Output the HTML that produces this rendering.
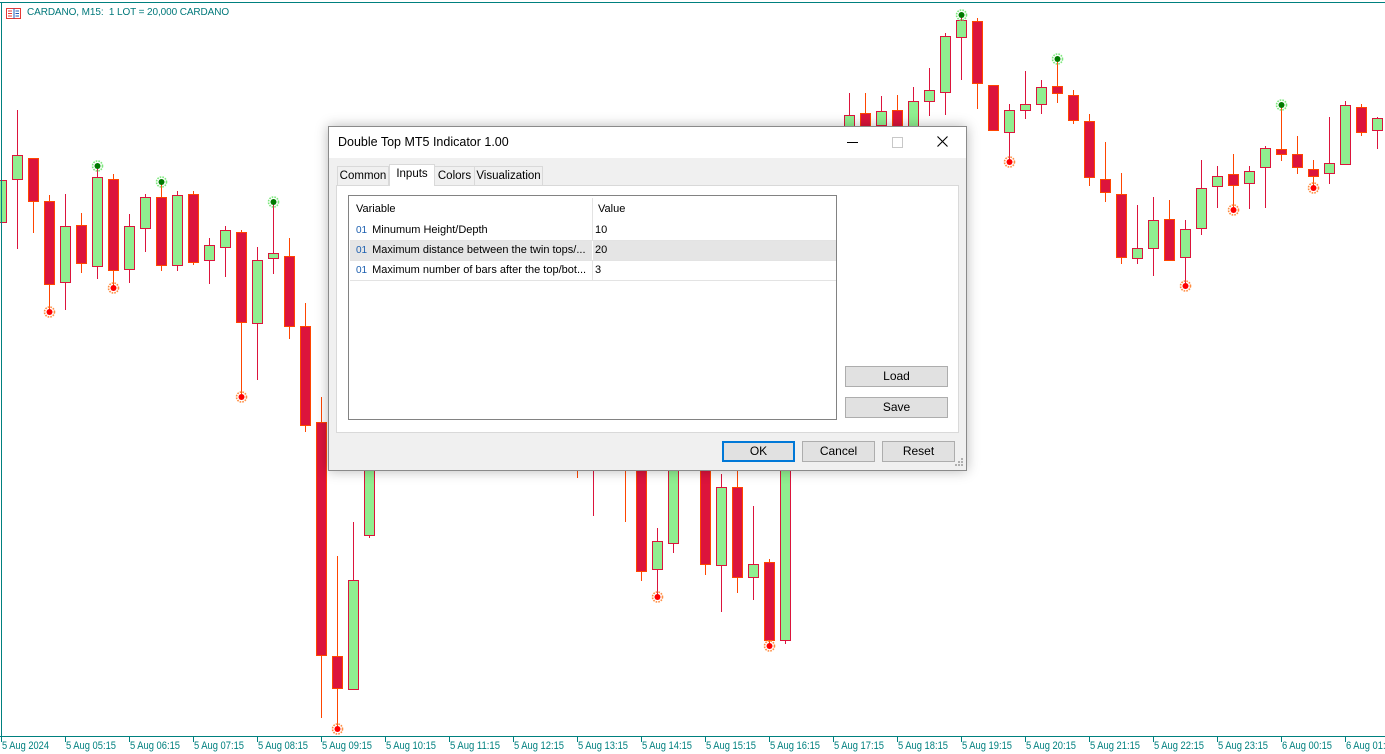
<!DOCTYPE html>
<html><head><meta charset="utf-8">
<style>
html,body{margin:0;padding:0;background:#fff;width:1385px;height:754px;overflow:hidden;position:relative;font-family:"Liberation Sans",sans-serif}
#chart{position:absolute;left:0;top:0}
.hdr{position:absolute;left:27px;top:7px;font-size:10px;color:#00787a;letter-spacing:-0.1px}
.dlg{position:absolute;left:328px;top:126px;width:637px;height:343px;background:#f0f0f0;border:1px solid #8a8a8a;box-shadow:0 0 12px rgba(0,0,0,0.28);font-size:12px;color:#000}
.title{position:absolute;left:0;top:0;width:637px;height:31px;background:#fff}
.title .t{position:absolute;left:9px;top:8px;font-size:12.5px}
.tab{position:absolute;top:39px;height:19px;border:1px solid #d9d9d9;border-bottom:none;background:#f0f0f0;font-size:11.5px;line-height:19px;text-align:center;box-sizing:border-box}
.tab.sel{top:37px;height:22px;background:#fff;line-height:19px;z-index:2}
.panel{position:absolute;left:7px;top:58px;width:623px;height:248px;background:#fff;border:1px solid #d9d9d9;box-sizing:border-box}
.list{position:absolute;left:11px;top:9px;width:489px;height:225px;border:1px solid #828282;box-sizing:border-box;background:#fff}
.row{position:absolute;left:1px;width:486px;height:20px;border-bottom:1px solid #e3e3e3;box-sizing:border-box;font-size:11px;line-height:19px}
.row .a{position:absolute;left:6px}
.row .b{position:absolute;left:245px}
.row .sep{position:absolute;left:242px;top:0;width:1px;height:19px;background:#e3e3e3}
.row .ic{color:#1b5fb0;font-size:10px;margin-right:5px}
.btn{position:absolute;height:21px;background:#e1e1e1;border:1px solid #adadad;box-sizing:border-box;text-align:center;line-height:19px;font-size:12px}
.btn.ok{border:2px solid #0078d7;line-height:17px}
</style></head><body>
<svg id="chart" width="1385" height="754" xmlns="http://www.w3.org/2000/svg"></svg>
<div class="hdr">CARDANO, M15:&nbsp; 1 LOT = 20,000 CARDANO</div>
<svg style="position:absolute;left:6px;top:8px" width="15" height="11">
<rect x="0.5" y="0.5" width="14" height="10" fill="#fff" stroke="#e53935"/>
<line x1="8" y1="0.5" x2="8" y2="10.5" stroke="#1e5bb8"/>
<line x1="2" y1="3" x2="6" y2="3" stroke="#e53935"/><line x1="2" y1="5.5" x2="6" y2="5.5" stroke="#e53935"/><line x1="2" y1="8" x2="6" y2="8" stroke="#e53935"/>
<line x1="9.5" y1="3" x2="13" y2="3" stroke="#1e5bb8"/><line x1="9.5" y1="5.5" x2="13" y2="5.5" stroke="#1e5bb8"/><line x1="9.5" y1="8" x2="13" y2="8" stroke="#1e5bb8"/>
</svg>

<div class="dlg">
 <div class="title"><span class="t">Double Top MT5 Indicator 1.00</span>
  <div style="position:absolute;left:518px;top:15px;width:11px;height:1px;background:#000"></div>
  <div style="position:absolute;left:563px;top:10px;width:9px;height:9px;border:1px solid #c8c8c8"></div>
  <svg style="position:absolute;left:608px;top:9px" width="11" height="11"><path d="M0.5 0.5L10.5 10.5M10.5 0.5L0.5 10.5" stroke="#000" stroke-width="1.1"/></svg>
 </div>
 <div class="tab" style="left:8px;width:52px">Common</div>
 <div class="tab sel" style="left:60px;width:46px">Inputs</div>
 <div class="tab" style="left:105px;width:41px">Colors</div>
 <div class="tab" style="left:145px;width:69px">Visualization</div>
 <div class="panel">
  <div class="list">
   <div class="row" style="top:2px;height:23px;line-height:23px;border-bottom:none"><span class="a">Variable</span><span class="b" style="left:248px">Value</span><span class="sep" style="height:23px"></span></div>
   <div class="row" style="top:25px"><span class="a"><span class="ic">01</span>Minumum Height/Depth</span><span class="sep"></span><span class="b">10</span></div>
   <div class="row" style="top:45px;background:#e5e5e5"><span class="a"><span class="ic">01</span>Maximum distance between the twin tops/...</span><span class="sep" style="background:#fff"></span><span class="b">20</span></div>
   <div class="row" style="top:65px"><span class="a"><span class="ic">01</span>Maximum number of bars after the top/bot...</span><span class="sep"></span><span class="b">3</span></div>
  </div>
  <div class="btn" style="left:508px;top:180px;width:103px">Load</div>
  <div class="btn" style="left:508px;top:211px;width:103px">Save</div>
 </div>
 <div class="btn ok" style="left:393px;top:314px;width:73px">OK</div>
 <div class="btn" style="left:473px;top:314px;width:73px">Cancel</div>
 <div class="btn" style="left:553px;top:314px;width:73px">Reset</div>
 <svg style="position:absolute;left:626px;top:331px" width="9" height="9"><g fill="#b0b0b0"><rect x="6" y="0" width="2" height="2"/><rect x="3" y="3" width="2" height="2"/><rect x="6" y="3" width="2" height="2"/><rect x="0" y="6" width="2" height="2"/><rect x="3" y="6" width="2" height="2"/><rect x="6" y="6" width="2" height="2"/></g></svg>
</div>

<script>
var s=document.getElementById('chart'),h='';
var C='#dc143c',O='#ff4500',G='#90ee90',T='#00807f';
var d=[
[0,1,180,222,175,230],[1,1,155,179,110,249],[2,0,158,201,158,233],[3,0,201,284,195,312],[4,1,226,282,194,310],
[5,0,225,263,213,273],[6,1,177,266,166,279],[7,0,179,270,174,288],[8,1,226,269,214,283],[9,1,197,228,194,252],
[10,0,197,265,182,271],[11,1,195,265,191,271],[12,0,194,262,191,265],[13,1,245,260,238,284],[14,1,230,247,226,277],
[15,0,232,322,230,397],[16,1,260,323,247,380],[17,1,253,258,202,274],[18,0,256,326,238,339],[19,0,326,425,303,432],
[20,0,422,655,397,718],[21,0,656,688,556,729],[22,1,580,689,522,690],[23,1,440,535,430,538],
[36,0,440,460,440,478],[37,1,440,460,440,516],[39,0,440,460,440,522],[40,0,440,571,440,581],[41,1,541,569,528,597],
[42,1,440,543,440,553],[44,0,440,564,440,575],[45,1,487,565,474,612],[46,0,487,577,470,593],[47,1,564,577,506,600],
[48,0,562,640,559,646],[49,1,440,640,440,644],
[53,1,115,150,93,150],[54,0,113,150,93,150],[55,1,111,125,96,127],[56,0,110,150,95,150],[57,1,101,150,87,150],
[58,1,90,101,68,116],[59,1,36,92,33,115],[60,1,20,37,15,80],[61,0,21,83,18,109],[62,0,85,130,85,130],
[63,1,110,132,104,162],[64,1,104,110,71,119],[65,1,87,104,80,114],[66,0,86,93,59,103],[67,0,95,120,90,124],
[68,0,121,177,114,186],[69,0,179,192,142,202],[70,0,194,257,173,264],[71,1,248,258,205,264],[72,1,220,248,197,276],
[73,0,219,260,200,261],[74,1,229,257,220,286],[75,1,188,228,160,235],[76,1,176,186,166,208],[77,0,174,185,154,210],
[78,1,171,183,166,209],[79,1,148,167,146,208],[80,0,149,154,105,161],[81,0,154,167,136,174],[82,0,169,176,160,188],
[83,1,163,173,117,184],[84,1,105,164,101,164],[85,0,107,132,104,136],[86,1,118,130,117,149]];
d.forEach(function(c){var x=1+16*c[0],bs=c[1]?C:O,f=c[1]?G:C;
h+='<line x1="'+(x+.5)+'" y1="'+c[4]+'" x2="'+(x+.5)+'" y2="'+c[5]+'" stroke="'+bs+'" stroke-width="1"/>';
h+='<rect x="'+(x-4.5)+'" y="'+(c[2]+.5)+'" width="10" height="'+Math.max(c[3]-c[2],2)+'" fill="'+f+'" stroke="'+bs+'" stroke-width="1"/>';});
var m=[[3,312,0],[6,166,1],[7,288,0],[10,182,1],[15,397,0],[17,202,1],[21,729,0],[41,597,0],[48,646,0],[60,15,1],[63,162,0],[66,59,1],[74,286,0],[77,210,0],[80,105,1],[82,188,0]];
m.forEach(function(a){var x=1.5+16*a[0],y=a[1];
var hc=a[2]?'#7be87b':'#ff8c40',cc=a[2]?'#007a00':'#ff0000';
h+='<circle cx="'+x+'" cy="'+y+'" r="5" fill="none" stroke="'+hc+'" stroke-width="1.6" stroke-dasharray="1.6 1.1"/>';
h+='<circle cx="'+x+'" cy="'+y+'" r="3" fill="'+cc+'"/>';});
h+='<line x1="0" y1="2.5" x2="1385" y2="2.5" stroke="'+T+'"/>';
h+='<line x1="1.5" y1="2" x2="1.5" y2="737" stroke="'+T+'"/>';
h+='<line x1="0" y1="736.5" x2="1385" y2="736.5" stroke="'+T+'"/>';
var L=['5 Aug 2024','5 Aug 05:15','5 Aug 06:15','5 Aug 07:15','5 Aug 08:15','5 Aug 09:15','5 Aug 10:15','5 Aug 11:15','5 Aug 12:15','5 Aug 13:15','5 Aug 14:15','5 Aug 15:15','5 Aug 16:15','5 Aug 17:15','5 Aug 18:15','5 Aug 19:15','5 Aug 20:15','5 Aug 21:15','5 Aug 22:15','5 Aug 23:15','6 Aug 00:15','6 Aug 01:15'];
L.forEach(function(t,i){var x=1.5+64*i;
h+='<line x1="'+x+'" y1="736" x2="'+x+'" y2="742" stroke="'+T+'"/>';
h+='<text x="'+(x+0.5)+'" y="749" font-family="Liberation Sans, sans-serif" font-size="11" fill="'+T+'" textLength="'+(i==0?47:50)+'" lengthAdjust="spacingAndGlyphs">'+t+'</text>';});
s.innerHTML=h;
</script>
</body></html>
